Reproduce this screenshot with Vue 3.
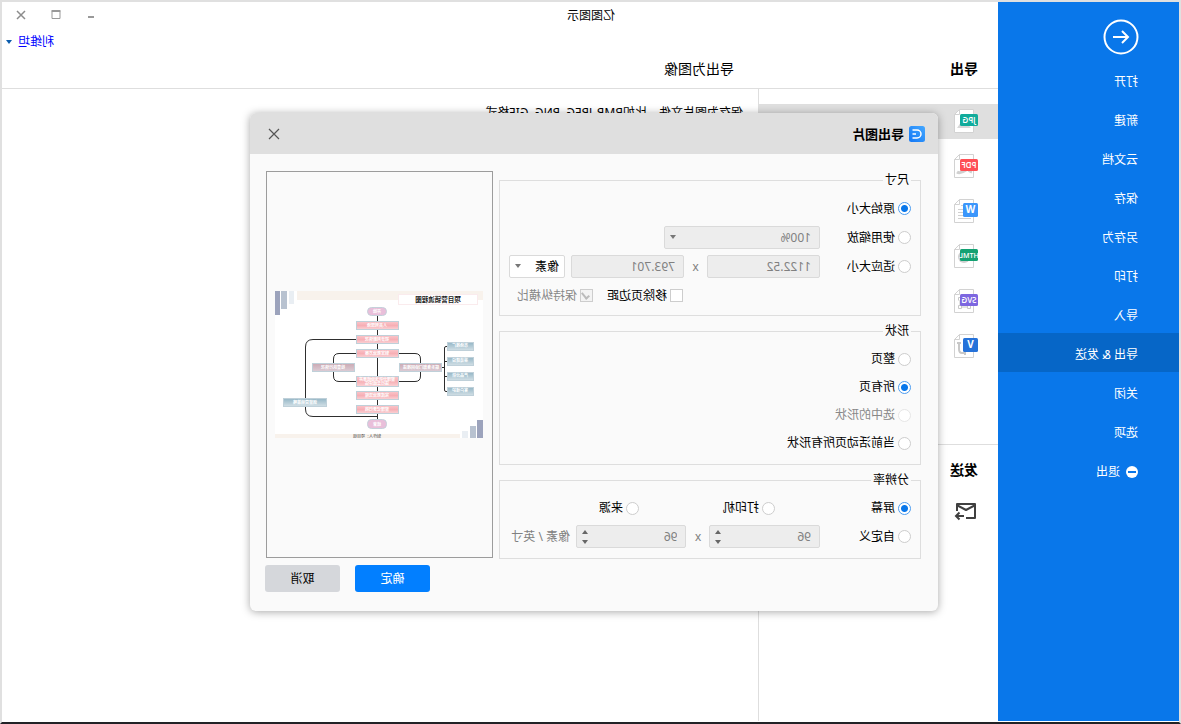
<script setup>
import { ref } from 'vue'

const menu = ['打开', '新建', '云文档', '保存', '另存为', '打印', '导入', '导出 & 发送', '关闭', '选项']
const activeMenu = ref('导出 & 发送')

const formats = [
  { name: 'JPG', color: '#11ab9b', art: 'image' },
  { name: 'PDF', color: '#ff4f55', art: 'pdf' },
  { name: 'W', color: '#3b96fb', art: 'lines' },
  { name: 'HTML', color: '#13a172', art: 'globe' },
  { name: 'SVG', color: '#7d67e0', art: 'nodes' },
  { name: 'V', color: '#2672d9', art: 'flow' }
]
const activeFormat = ref('JPG')

const size = ref('origin')
const shape = ref('pages')
const dpi = ref('screen')
const shapes = [
  { id: 'page', label: '整页' },
  { id: 'pages', label: '所有页' },
  { id: 'selected', label: '选中的形状', disabled: true },
  { id: 'active', label: '当前活动页所有形状' }
]
const dpis = [
  { id: 'screen', label: '屏幕' },
  { id: 'printer', label: '打印机' },
  { id: 'source', label: '来源' }
]

const steps = [
  { y: 30, h: 9, t: '人员到现场' },
  { y: 44, h: 9, t: '初步判断情况' },
  { y: 58, h: 9, t: '制定救治方案' },
  { y: 100, h: 9, t: '完成救治流程' },
  { y: 114, h: 9, t: '整理记录归档' }
]
const teams = [
  { y: 51, t: '市场推广' },
  { y: 66, t: '渠道建设' },
  { y: 81, t: '产品分析' },
  { y: 96, t: '客户维护' }
]
</script>

<template>
  <div class="window">
    <nav class="sidebar">
      <button class="back" aria-label="返回">
        <svg viewBox="0 0 36 36" width="36" height="36" fill="none" stroke="#fff" stroke-width="2">
          <circle cx="18" cy="18" r="16.5" />
          <path d="M26 18H11M17 12l-6 6 6 6" />
        </svg>
      </button>
      <button
        v-for="m in menu"
        :key="m"
        class="item"
        :class="{ active: m === activeMenu }"
        @click="activeMenu = m"
      >{{ m }}</button>
      <button class="item exit">
        <svg viewBox="0 0 12 12" width="12" height="12">
          <circle cx="6" cy="6" r="6" fill="#fff" />
          <path d="M2 6h8" stroke="#0977ea" stroke-width="2" />
        </svg>
        <span>退出</span>
      </button>
    </nav>

    <main class="main">
      <header class="top">
        <h1 class="app-name">亿图图示</h1>
        <div class="controls">
          <button aria-label="最小化"><svg viewBox="0 0 12 12" width="12" height="12"><path d="M3 8h6" stroke="#999" stroke-width="2" /></svg></button>
          <button aria-label="最大化"><svg viewBox="0 0 12 12" width="12" height="12" fill="none" stroke="#999"><path d="M2 2.5h8v7H2z" /><path d="M1.500 2h9" stroke-width="2" /></svg></button>
          <button aria-label="关闭"><svg viewBox="0 0 12 12" width="12" height="12"><path d="M2 2l8 8M10 2l-8 8" stroke="#8c8c8c" stroke-width="1.500" /></svg></button>
        </div>
        <a class="user" href="#">利维坦<svg viewBox="0 0 6 4" width="6" height="4"><path d="M0 0h6L3 4z" fill="#0b5cad" /></svg></a>
        <h2 class="list-title">导出</h2>
        <h2 class="pane-title">导出为图像</h2>
      </header>
      <div class="content">
        <aside class="list">
          <button
            v-for="f in formats"
            :key="f.name"
            class="format"
            :class="{ active: f.name === activeFormat }"
            :aria-label="f.name"
            @click="activeFormat = f.name"
          >
            <svg viewBox="0 0 24 24" width="24" height="24">
              <path d="M4.500 .5H18.500L23.500 5.500V23.500H4.500z" fill="#fff" stroke="#d2d2d2" />
              <path d="M18.500 .5V5.500H23.500" fill="none" stroke="#d2d2d2" />
              <path v-if="f.art === 'image'" d="M7 19l5-6 3 3 2-3 4 6z" fill="#d8d8d8" />
              <path v-else-if="f.art === 'pdf'" d="M6 18q3-1 4-3M12 16q6 4 9 2" fill="none" stroke="#d0d0d0" stroke-width="3" />
              <path v-else-if="f.art === 'lines'" d="M9 6.500h8M7 10.500h13M7 13.500h13M7 16.500h13M7 19.500h13" stroke="#d0d0d0" />
              <circle v-else-if="f.art === 'globe'" cx="14" cy="13" r="6" fill="#d0d0d0" />
              <path v-else-if="f.art === 'nodes'" d="M7.500 16.500h3v3h-3zM16.500 16.500h3v3h-3zM16.500 8.500h3v3M10.500 18h6M18 11v5" fill="none" stroke="#c8c8c8" />
              <path v-else d="M19 8v7q0 4-3 4h-4M17 9h4M13 17v4" fill="none" stroke="#c8c8c8" stroke-width="2" />
              <template v-if="f.name.length === 1">
                <rect y="4" width="15" height="14" rx="1.500" :fill="f.color" />
                <text x="7.500" y="14" class="mark">{{ f.name }}</text>
              </template>
              <template v-else>
                <rect y="5" width="18" height="12" rx="1.500" :fill="f.color" />
                <text x="9" y="14" class="mark" :class="f.name.length > 3 ? 'tiny' : 'small'">{{ f.name }}</text>
              </template>
            </svg>
          </button>
          <section class="send">
            <h2>发送</h2>
            <button class="mail" aria-label="发送邮件">
              <svg viewBox="0 0 24 20" width="24" height="20" fill="none" stroke="#404040" stroke-width="2">
                <path d="M12 17H3V3H21V10M3.500 4.500L12 9l8.500-4.500" stroke-linejoin="round" />
                <path d="M14 15h7M18.500 11.500l3.500 3.500-3.500 3.500" />
              </svg>
            </button>
          </section>
        </aside>
        <section class="pane">保存为图片文件，比如BMP, JPEG, PNG, GIF格式</section>
      </div>
    </main>

    <div class="dialog" role="dialog" aria-labelledby="dialog-title">
      <header class="dialog-head">
        <svg viewBox="0 0 16 16" width="16" height="16">
          <defs><linearGradient id="brand" x1="0" y1="0" x2="1" y2="1"><stop offset="0" stop-color="#45a8ff" /><stop offset="1" stop-color="#1277f5" /></linearGradient></defs>
          <rect width="16" height="16" rx="2.500" fill="url(#brand)" />
          <path d="M12.500 4H8a4 4 0 0 0 0 8h4.500M9 8h3.500" fill="none" stroke="#fff" stroke-width="1.500" />
        </svg>
        <h2 id="dialog-title">导出图片</h2>
        <button class="close" aria-label="关闭">
          <svg viewBox="0 0 12 12" width="12" height="12"><path d="M1 1l10 10M11 1L1 11" stroke="#555" stroke-width="1.200" /></svg>
        </button>
      </header>

      <form class="dialog-body" @submit.prevent>
        <div class="groups">
          <fieldset>
            <legend>尺寸</legend>
            <div class="row tall size-row">
              <label><input v-model="size" type="radio" name="size" value="origin" />原始大小</label>
            </div>
            <div class="row tall zoom-row">
              <label><input v-model="size" type="radio" name="size" value="zoom" />使用缩放</label>
              <span class="select">
                <select aria-label="缩放" disabled><option>100%</option></select>
                <svg viewBox="0 0 6 4" width="6" height="4"><path d="M0 0h6L3 4z" fill="#777" /></svg>
              </span>
            </div>
            <div class="row tall size-row">
              <label><input v-model="size" type="radio" name="size" value="fit" />适应大小</label>
              <input class="field" aria-label="宽度" value="1122.52" disabled />
              <span class="times">x</span>
              <input class="field" aria-label="高度" value="793.701" disabled />
              <span class="select unit">
                <select aria-label="单位"><option>像素</option></select>
                <svg viewBox="0 0 6 4" width="6" height="4"><path d="M0 0h6L3 4z" fill="#777" /></svg>
              </span>
            </div>
            <div class="row tall checks">
              <label><input type="checkbox" />移除页边距</label>
              <label class="off"><input type="checkbox" checked disabled />保持纵横比</label>
            </div>
          </fieldset>

          <fieldset class="shapes">
            <legend>形状</legend>
            <div v-for="s in shapes" :key="s.id" class="row">
              <label :class="{ off: s.disabled }">
                <input v-model="shape" type="radio" name="shape" :value="s.id" :disabled="s.disabled" />{{ s.label }}
              </label>
            </div>
          </fieldset>

          <fieldset class="dpi">
            <legend>分辨率</legend>
            <div class="row thirds">
              <label v-for="d in dpis" :key="d.id">
                <input v-model="dpi" type="radio" name="dpi" :value="d.id" />{{ d.label }}
              </label>
            </div>
            <div class="row tall dpi-row">
              <label><input v-model="dpi" type="radio" name="dpi" value="custom" />自定义</label>
              <span class="spin">
                <input class="field" aria-label="水平分辨率" value="96" disabled />
                <svg viewBox="0 0 6 14" width="6" height="14"><path d="M0 4h6L3 0zM0 10h6L3 14z" fill="#666" /></svg>
              </span>
              <span class="times">x</span>
              <span class="spin">
                <input class="field" aria-label="垂直分辨率" value="96" disabled />
                <svg viewBox="0 0 6 14" width="6" height="14"><path d="M0 4h6L3 0zM0 10h6L3 14z" fill="#666" /></svg>
              </span>
              <span class="per">像素 / 英寸</span>
            </div>
          </fieldset>
        </div>

        <div class="side">
          <div class="preview">
            <svg viewBox="0 0 208 147" width="208" height="147">
              <defs>
                <linearGradient id="pink" x1="0" y1="0" x2="0" y2="1"><stop offset="0" stop-color="#fbc5ca" /><stop offset=".5" stop-color="#f6afb5" /><stop offset="1" stop-color="#fbd3d6" /></linearGradient>
                <linearGradient id="mauve" x1="0" y1="0" x2="0" y2="1"><stop offset="0" stop-color="#cba9b3" /><stop offset="1" stop-color="#dccdd6" /></linearGradient>
                <linearGradient id="blue" x1="0" y1="0" x2="0" y2="1"><stop offset="0" stop-color="#94b6c6" /><stop offset="1" stop-color="#d3e0e6" /></linearGradient>
              </defs>
              <rect width="208" height="147" fill="#fff" />
              <path d="M0 0h186v9H0zM23 143h185v4H23z" fill="#f8f2ec" />
              <path d="M203 0h5v24h-5zM0 129h6v18H0z" fill="#9ca3bc" />
              <path d="M196 0h6v18h-6zM7 135h6v12H7z" fill="#b8c2d0" />
              <path d="M189 0h5v13h-5zM15 140h6v7h-6z" fill="#e9eef3" />
              <rect x="5.500" y="3.500" width="79" height="10" fill="#fff" stroke="#faebed" />
              <text x="45" y="10.500" class="chart-title">项目营销流程图</text>
              <g fill="none" stroke="#2e2e2e">
                <path d="M105.500 24v104M127 48.500h43q7.500 0 7.500 7.500v62q0 7.500-7.500 7.500h-64" />
                <path d="M84 62.500H68q-5.500 0-5.500 5.500v17q0 5.500 5.500 5.500h16M127 62.500h17q5.500 0 5.500 5.500v17q0 5.500-5.500 5.500h-17" />
                <path d="M42 76.500h-3.500M36 55.500h1q1.500 0 1.500 1.500v42q0 1.500-1.500 1.500h-1M38 70.500h-2M38 85.500h-2" />
              </g>
              <g fill="#e9bfda" stroke="#c4d1da">
                <rect x="96.500" y="16.500" width="19" height="8" rx="4" />
                <rect x="96.500" y="128.500" width="19" height="9" rx="4" />
              </g>
              <g stroke="#bfd0d9">
                <rect v-for="s in steps" :key="s.y" x="84.500" :y="s.y + 0.5" width="42" :height="s.h - 1" fill="url(#pink)" />
                <rect x="84.500" y="85.500" width="42" height="10" fill="url(#pink)" />
                <rect x="41.500" y="72.500" width="42" height="8" fill="url(#mauve)" />
                <rect x="128.500" y="72.500" width="42" height="8" fill="url(#mauve)" />
                <rect v-for="t in teams" :key="t.y" x="9.500" :y="t.y + 0.5" width="26" height="8" fill="url(#blue)" />
                <rect x="156.500" y="107.500" width="43" height="8" fill="url(#blue)" />
              </g>
              <g class="chart-label">
                <text x="106" y="21.500">开始</text>
                <text x="106" y="134.500">结束</text>
                <text v-for="s in steps" :key="s.y" x="106" :y="s.y + 6">{{ s.t }}</text>
                <text x="106" y="90">整理分析活动结果并</text>
                <text x="106" y="94">进行总结评估</text>
                <text x="62" y="78">联系各部门协同推进</text>
                <text x="150" y="78">检查执行情况</text>
                <text v-for="t in teams" :key="t.y" x="23" :y="t.y + 5">{{ t.t }}</text>
                <text x="178" y="112.500">调整营销策略</text>
              </g>
              <text x="116" y="147" class="chart-note">制作人：项目组</text>
            </svg>
          </div>
          <div class="actions">
            <button type="submit" class="ok">确定</button>
            <button type="button" class="cancel">取消</button>
          </div>
        </div>
      </form>
    </div>
  </div>
</template>

<style>
body {
  margin: 0;
}
</style>

<style scoped>
.window {
  position: relative;
  display: flex;
  min-height: 100vh;
  box-sizing: border-box;
  padding-bottom: 1px;
  border: 2px solid #e0e0e0;
  border-bottom-color: #222226;
  background: #fff;
  color: #000;
  font: 12px/16px 'Noto Sans', 'Noto Sans CJK SC', sans-serif;
  transform: scaleX(-1);
  overflow: hidden;
}
h1,
h2 {
  margin: 0;
  font-size: 14px;
  line-height: 20px;
}
button {
  padding: 0;
  border: 0;
  background: none;
  font: inherit;
  color: inherit;
}
svg {
  display: block;
  flex: none;
}

.sidebar {
  flex: none;
  width: 181px;
  background: #0977ea;
  color: #fff;
}
.back {
  display: block;
  margin: 17px 0 5px 40px;
}
.item {
  display: flex;
  align-items: center;
  width: 100%;
  height: 39px;
  padding: 4px 0 0 41px;
}
.item.active {
  background: #0666c7;
}
.exit {
  gap: 6px;
}

.main {
  flex: 1;
  display: flex;
  flex-direction: column;
}
.top {
  display: grid;
  grid-template-columns: 239px 1fr auto;
  grid-template-rows: 26px 28px 32px;
  align-items: center;
  border-bottom: 1px solid #dedede;
}
.app-name {
  grid-column: 1 / 3;
  padding: 2px 0 0 383px;
  font-size: 12px;
  font-weight: 400;
}
.controls {
  display: flex;
  gap: 23px;
  padding-right: 13px;
}
.user {
  grid-column: 3;
  grid-row: 2;
  justify-self: end;
  display: flex;
  align-items: center;
  gap: 6px;
  padding-right: 4px;
  color: #00f;
  text-decoration: none;
}
.list-title {
  padding-left: 20px;
  grid-row: 3;
}
.pane-title {
  padding-left: 25px;
  grid-row: 3;
  font-weight: 400;
}
.list-title,
.pane-title {
  padding-bottom: 6px;
}
.content {
  flex: 1;
  display: flex;
}
.list {
  flex: none;
  display: flex;
  flex-direction: column;
  gap: 10px;
  width: 239px;
  padding-top: 15px;
  border-right: 1px solid #dedede;
}
.format {
  height: 35px;
  padding: 0 0 1px 20px;
}
.format.active {
  background: #dfdfdf;
}
.mark {
  fill: #fff;
  font: 700 10px 'Open Sans', sans-serif;
  text-anchor: middle;
}
.mark.small {
  font-size: 8px;
  font-weight: 600;
}
.mark.tiny {
  font-size: 7px;
  font-weight: 600;
}
.send {
  margin-top: 70px;
  padding: 15px 0 0 20px;
  border-top: 1px solid #dedede;
}
.mail {
  display: block;
  margin-top: 21px;
}
.pane {
  flex: 1;
  padding: 16px 15px;
}

.dialog {
  position: absolute;
  top: 111px;
  left: 241px;
  width: 688px;
  border-radius: 6px;
  background: #fafafa;
  box-shadow: 0 1px 8px rgba(0, 0, 0, 0.35);
  overflow: hidden;
}
.dialog-head {
  display: flex;
  align-items: center;
  gap: 5px;
  height: 41px;
  padding: 0 18px 0 13px;
  background: #dfdfdf;
}
.dialog-head h2 {
  flex: 1;
  font-size: 13px;
}
.dialog-body {
  display: flex;
  gap: 6px;
  padding: 17px 15px 19px 17px;
}
.groups {
  flex: 1;
  display: flex;
  flex-direction: column;
  gap: 7px;
  padding-top: 1px;
}
fieldset {
  min-width: 0;
  margin: 0;
  padding: 6px 9px 5px;
  border: 1px solid #dedede;
}
.shapes {
  padding-bottom: 7px;
}
.dpi {
  padding-bottom: 7px;
}
legend {
  height: 16px;
  padding: 0 2px;
}
.row {
  display: grid;
  align-items: center;
  height: 28px;
}
.row.tall {
  height: 29px;
}
.size-row {
  grid-template-columns: 91px 1fr 23px 1fr 62px;
}
.zoom-row {
  grid-template-columns: 91px 156px;
}
.thirds {
  grid-template-columns: 136px 136px 1fr;
}
.dpi-row {
  grid-template-columns: 91px 1fr 23px 1fr 67px;
}
.checks {
  grid-template-columns: 90px 1fr;
  padding-left: 228px;
}
label {
  display: flex;
  align-items: center;
  gap: 3px;
  white-space: nowrap;
}
input[type='radio'],
input[type='checkbox'] {
  appearance: none;
  flex: none;
  box-sizing: border-box;
  width: 13px;
  height: 13px;
  margin: 0;
  border: 1px solid #cdcdcd;
  background: #fff;
}
input[type='radio'] {
  border-radius: 50%;
}
input[type='radio']:checked {
  border-color: #4c9cf0;
  background: radial-gradient(circle, #0977ea 3px, #fff 4px);
}
input[type='radio']:disabled {
  border-color: #e6e6e6;
}
.off {
  color: #888;
}
input[type='checkbox'] {
  position: relative;
}
input[type='checkbox']:checked {
  background: #f3f3f3;
}
input[type='checkbox']:checked::after {
  content: '';
  position: absolute;
  left: 4px;
  top: 1px;
  width: 3px;
  height: 6px;
  border: solid #bbb;
  border-width: 0 2px 2px 0;
  transform: rotate(40deg);
}
.field,
select {
  appearance: none;
  box-sizing: border-box;
  width: 100%;
  min-width: 0;
  height: 23px;
  margin: 0;
  padding: 0 8px;
  border: 1px solid #dadada;
  border-radius: 2px;
  background: #ededed;
  color: #808080;
  font: inherit;
  opacity: 1;
}
.select,
.spin {
  position: relative;
  height: 23px;
}
.select svg {
  position: absolute;
  right: 6px;
  top: 9px;
}
.spin svg {
  position: absolute;
  right: 6px;
  top: 5px;
}
.unit {
  margin-left: 6px;
}
.unit select {
  padding: 0 5px;
  background: #fff;
  color: #000;
}
.times,
.per {
  color: #808080;
  text-align: center;
  white-space: nowrap;
}
.per {
  padding-left: 6px;
  text-align: left;
}

.side {
  display: flex;
  flex-direction: column;
  gap: 7px;
  width: 228px;
}
.preview {
  display: flex;
  align-items: center;
  justify-content: center;
  min-height: 385px;
  margin-right: 1px;
  border: 1px solid #9c9c9c;
}
.chart-title {
  fill: #222;
  font: 700 6.500px 'Noto Sans CJK SC', sans-serif;
  text-anchor: middle;
}
.chart-label {
  fill: #fff;
  font: 700 4px 'Noto Sans CJK SC', sans-serif;
  text-anchor: middle;
}
.chart-note {
  fill: #444;
  font: 4px 'Noto Sans CJK SC', sans-serif;
  text-anchor: middle;
}
.actions {
  display: flex;
  justify-content: flex-end;
  gap: 15px;
}
.actions button {
  width: 75px;
  height: 27px;
  border-radius: 3px;
}
.actions .ok {
  background: #027fff;
  color: #fff;
}
.actions .cancel {
  background: #d5d7db;
}
</style>
